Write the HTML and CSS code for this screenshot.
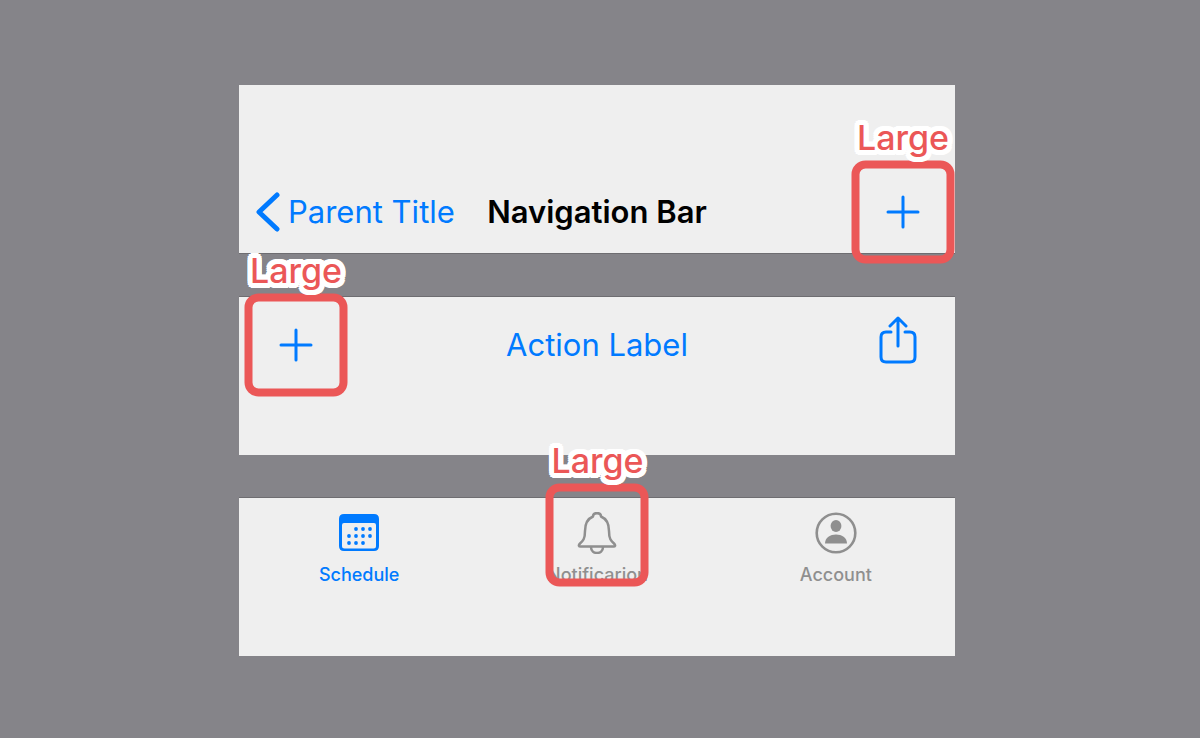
FILE: index.html
```
<!DOCTYPE html>
<html lang="en">
<head>
<meta charset="UTF-8">
<meta name="viewport" content="width=device-width, initial-scale=1.0">
<title>Large Content Viewer</title>
<link rel="stylesheet" href="styles.css">
</head>
<body>

<main class="screens">
  <header class="bar navbar">
    <a class="back" href="#">
      <svg width="24" height="40" viewBox="0 0 24 40" fill="none" stroke="currentColor" stroke-width="5" stroke-linecap="round" stroke-linejoin="round">
        <path d="M21 3 L3 20 L21 37"/>
      </svg>
      <span>Parent Title</span>
    </a>
    <h1 class="title">Navigation Bar</h1>
    <button class="target" type="button" aria-label="Add">
      <svg width="34" height="34" viewBox="0 0 34 34" stroke="currentColor" stroke-width="3" stroke-linecap="round">
        <path d="M17 2V32M2 17H32"/>
      </svg>
      <span class="callout"><span class="callout-label">Large</span></span>
    </button>
  </header>

  <div class="bar toolbar">
    <button class="target" type="button" aria-label="Add">
      <svg width="34" height="34" viewBox="0 0 34 34" stroke="currentColor" stroke-width="3" stroke-linecap="round">
        <path d="M17 2V32M2 17H32"/>
      </svg>
      <span class="callout"><span class="callout-label">Large</span></span>
    </button>
    <button class="action" type="button">Action Label</button>
    <button class="share" type="button" aria-label="Share">
      <svg width="38" height="48" viewBox="0 0 38 48" fill="none" stroke="currentColor" stroke-width="3" stroke-linecap="round" stroke-linejoin="round">
        <path d="M12 16H7Q2 16 2 21V41Q2 46 7 46H31Q36 46 36 41V21Q36 16 31 16H26"/>
        <path d="M19 30V3M11 10L19 2L27 10"/>
      </svg>
    </button>
  </div>

  <nav class="bar tabbar">
    <a class="tab active" href="#">
      <svg width="42" height="42" viewBox="0 0 42 42" fill="currentColor">
        <path fill-rule="evenodd" d="M6 2H36Q41 2 41 7V34Q41 39 36 39H6Q1 39 1 34V7Q1 2 6 2ZM6 11Q4 11 4 13V34Q4 36.500 6.500 36.500H35.500Q38 36.500 38 34V13Q38 11 36 11Z"/>
        <circle cx="18" cy="17" r="1.900"/><circle cx="25" cy="17" r="1.900"/><circle cx="32" cy="17" r="1.900"/>
        <circle cx="11" cy="24" r="1.900"/><circle cx="18" cy="24" r="1.900"/><circle cx="25" cy="24" r="1.900"/><circle cx="32" cy="24" r="1.900"/>
        <circle cx="11" cy="31" r="1.900"/><circle cx="18" cy="31" r="1.900"/><circle cx="25" cy="31" r="1.900"/>
      </svg>
      <span>Schedule</span>
    </a>
    <a class="tab" href="#">
      <svg width="42" height="42" viewBox="0 0 42 42" fill="none" stroke="currentColor" stroke-width="2.500" stroke-linejoin="round">
        <path d="M17 4.500C17 0 25 0 25 4.500C31 7 33 12 33 19C33 27 35 29 38 31.500C40 33.500 39 34.500 37.500 34.500H4.500C3 34.500 2 33.500 4 31.500C7 29 9 27 9 19C9 12 11 7 17 4.500Z"/>
        <path d="M15 35C15 43 27 43 27 35"/>
      </svg>
      <span>Notificarion</span>
      <span class="callout"><span class="callout-label">Large</span></span>
    </a>
    <a class="tab" href="#">
      <svg width="42" height="42" viewBox="0 0 42 42" fill="currentColor">
        <circle cx="21" cy="21" r="19.300" fill="none" stroke="currentColor" stroke-width="2.600"/>
        <ellipse cx="21" cy="14" rx="5.400" ry="6"/>
        <path d="M10 31.500C10 19.500 32 19.500 32 31.500Z"/>
      </svg>
      <span>Account</span>
    </a>
  </nav>
</main>

</body>
</html>
```
FILE: styles.css
```
* {
  box-sizing: border-box;
}
body {
  margin: 0;
  min-height: 100vh;
  background-color: #858489;
  font-family: Inter, "Liberation Sans", Arial, sans-serif;
}
a {
  color: inherit;
  text-decoration: none;
}
button {
  padding: 0;
  border: none;
  background: none;
  color: inherit;
  font: inherit;
  cursor: pointer;
}
svg {
  display: block;
  flex: none;
}
.screens {
  display: flex;
  flex-direction: column;
  gap: 42px;
  max-width: 722px;
  margin: 0 auto;
  padding: 85px 6px 80px 0;
}
.bar {
  background-color: #efefef;
  color: #007aff;
  font-size: 31px;
  line-height: 40px;
}
.navbar,
.toolbar {
  display: grid;
  grid-template-columns: 1fr auto 1fr;
  align-items: center;
}
.navbar {
  padding: 86px 1px 0;
  border-bottom: 1px solid #6e6d71;
}
.back {
  display: flex;
  align-items: center;
  gap: 8px;
  padding-left: 16px;
  white-space: nowrap;
}
.title {
  margin: 0;
  color: #000;
  font-size: 31px;
  font-weight: 600;
}
.target {
  position: relative;
  display: flex;
  align-items: center;
  justify-content: center;
  width: 102px;
  height: 96px;
}
.navbar .target {
  justify-self: end;
  height: 82px;
}
.toolbar {
  padding: 0 6px 62px;
  border-top: 1px solid #6e6d71;
}
.share {
  justify-self: end;
  margin: 0 32px 10px 0;
}
.tabbar {
  display: grid;
  grid-template-columns: repeat(3, 1fr);
  padding: 14px 0 67px 1px;
  border-top: 1px solid #6e6d71;
}
.tab {
  position: relative;
  display: flex;
  flex-direction: column;
  align-items: center;
  gap: 7px;
  color: #8f8f8f;
  font-size: 18px;
  font-weight: 500;
  line-height: 28px;
}
.tab.active {
  color: #007aff;
}
/* red frame around the control, label sits on top of it */
.callout {
  position: absolute;
  top: 50%;
  left: 50%;
  width: 103px;
  height: 103px;
  border: 8px solid #eb5757;
  border-radius: 14px;
  transform: translate(-50%, -50%);
}
.tab .callout {
  top: 23px;
}
.callout-label {
  position: absolute;
  bottom: 100%;
  left: 50%;
  padding-bottom: 11px;
  transform: translateX(-50%);
  color: #eb5757;
  font-size: 34px;
  font-weight: 500;
  line-height: 40px;
  text-shadow:
    5px 0 #fff, -5px 0 #fff, 0 5px #fff, 0 -5px #fff,
    4px 4px #fff, -4px 4px #fff, 4px -4px #fff, -4px -4px #fff,
    5px 2px #fff, -5px 2px #fff, 5px -2px #fff, -5px -2px #fff,
    2px 5px #fff, -2px 5px #fff, 2px -5px #fff, -2px -5px #fff,
    2px 0 #fff, -2px 0 #fff, 0 2px #fff, 0 -2px #fff;
}
```
